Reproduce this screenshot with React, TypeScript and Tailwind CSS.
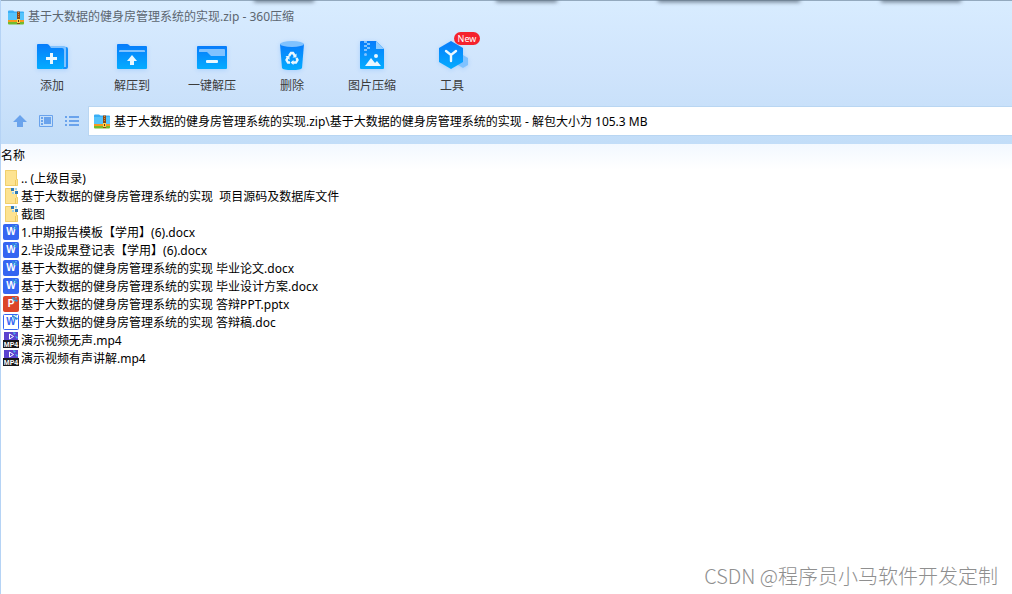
import type { ReactNode } from 'react'

type FileKind = 'up' | 'folder' | 'docx' | 'pptx' | 'doc' | 'mp4'

interface FileRow {
  kind: FileKind
  name: string
}

const files: FileRow[] = [
  { kind: 'up', name: '.. (上级目录)' },
  { kind: 'folder', name: '基于大数据的健身房管理系统的实现  项目源码及数据库文件' },
  { kind: 'folder', name: '截图' },
  { kind: 'docx', name: '1.中期报告模板【学用】(6).docx' },
  { kind: 'docx', name: '2.毕设成果登记表【学用】(6).docx' },
  { kind: 'docx', name: '基于大数据的健身房管理系统的实现 毕业论文.docx' },
  { kind: 'docx', name: '基于大数据的健身房管理系统的实现 毕业设计方案.docx' },
  { kind: 'pptx', name: '基于大数据的健身房管理系统的实现 答辩PPT.pptx' },
  { kind: 'doc', name: '基于大数据的健身房管理系统的实现 答辩稿.doc' },
  { kind: 'mp4', name: '演示视频无声.mp4' },
  { kind: 'mp4', name: '演示视频有声讲解.mp4' },
]

function ArchiveIcon() {
  return (
    <svg viewBox="0 0 16 15" className="h-[15px] w-4 shrink-0" aria-hidden="true">
      <path d="M0 1.500Q0 .5 1 .5h4l1.500 1H15q1 0 1 1V11H0z" fill="#3aaef5" />
      <path d="M0 3h16v7H0z" fill="#55c3fb" />
      <path d="M0 10h16v2H0z" fill="#f79a1f" />
      <path d="M0 12h16v1.500q0 1-1 1H1q-1 0-1-1z" fill="#72bb2c" />
      <path d="M9 1.500h3V14H9z" fill="#8c4a16" />
      <path d="M10 2h1v1h-1zM10 4h1v1h-1zM10 6h1v1h-1z" fill="#d98a35" />
      <path d="M9 9h3v4H9z" fill="#ffd24a" />
      <path d="M10 10h1v2h-1z" fill="#5b3312" />
    </svg>
  )
}

// shared vertical blue gradient of the toolbar drawings
function ToolSvg({ id, children }: { id: string; children: ReactNode }) {
  return (
    <svg viewBox="0 0 32 32" className="size-8 drop-shadow-sm drop-shadow-blue-400/30" aria-hidden="true">
      <defs>
        <linearGradient id={id} x1="0" y1="0" x2="0" y2="1">
          <stop offset="0" stopColor="#087cfb" />
          <stop offset="1" stopColor="#04acff" />
        </linearGradient>
      </defs>
      {children}
    </svg>
  )
}

const tools: { label: string; badge?: string; icon: ReactNode }[] = [
  {
    label: '添加',
    icon: (
      <ToolSvg id="g-add">
        <path d="M27 7h3q2 0 2 2v18q0 2-2 2h-3z" fill="#168ffb" />
        <path d="M13 6h15q2 0 2 2v19H14z" fill="#80c2ff" />
        <path d="M1 5q0-1 1-1h9q1 0 2 1l2 3h11q2 0 2 2v17q0 2-2 2H2q-1 0-1-1z" fill="url(#g-add)" />
        <path d="M14 13h3v4h4v3h-4v4h-3v-4h-4v-3h4z" fill="#eaf8ff" />
      </ToolSvg>
    ),
  },
  {
    label: '解压到',
    icon: (
      <ToolSvg id="g-extract">
        <path d="M1 5q0-1 1-1h9q1 0 2 1l1 1h16q1 0 1 1v21q0 1-1 1H2q-1 0-1-1z" fill="url(#g-extract)" />
        <path d="M3 12v-1q0-1 1-1h24q1 0 1 1v1z" fill="#80c2ff" />
        <path d="M16 15l5 6h-3v4h-4v-4h-3z" fill="#eaf8ff" />
      </ToolSvg>
    ),
  },
  {
    label: '一键解压',
    icon: (
      <ToolSvg id="g-quick">
        <rect x="1" y="6" width="30" height="23" rx="1" fill="url(#g-quick)" />
        <path d="M3 12v-2q0-1 1-1h24q1 0 1 1v6H15l-4-4z" fill="#80c2ff" />
        <rect x="10" y="20" width="12" height="3" rx="1" fill="#eaf8ff" />
      </ToolSvg>
    ),
  },
  {
    label: '删除',
    icon: (
      <ToolSvg id="g-del">
        <path d="M4 4h24l-2 24q-1 2-10 2T6 28z" fill="url(#g-del)" />
        <ellipse cx="16" cy="4" rx="12" ry="3" fill="#80c2ff" />
        <g fill="none" stroke="#eaf8ff" strokeWidth="2.400">
          <path d="M13 16l2-3h2l2 3" />
          <path d="M20.500 18l1 2-1.500 2.500h-4" />
          <path d="M14 22.500h-2L10.500 20l1.500-3" />
        </g>
        <path d="M20.500 13.500v4h-4zM17.500 20v5L14.500 22.500zM9.500 16h4v4z" fill="#eaf8ff" />
      </ToolSvg>
    ),
  },
  {
    label: '图片压缩',
    icon: (
      <ToolSvg id="g-img">
        <path d="M4 2q0-1 1-1h15l8 8v19q0 1-1 1H5q-1 0-1-1z" fill="url(#g-img)" />
        <path d="M20 1l8 8h-8z" fill="#90ccff" />
        <path d="M8 1h3v2H8zM11 3h3v2h-3zM8 5h3v2H8zM11 7h3v2h-3zM8 9h3v2H8z" fill="#80c2ff" />
        <circle cx="9.500" cy="14.500" r="1.500" fill="#80c2ff" />
        <circle cx="20" cy="16" r="2" fill="#eaf8ff" />
        <path d="M9 26l6-8 4 5 2-2 4 5z" fill="#eaf8ff" />
      </ToolSvg>
    ),
  },
  {
    label: '工具',
    badge: 'New',
    icon: (
      <ToolSvg id="g-tool">
        <path d="M27 15l5 3v7l-5 3-5-3v-7z" fill="#80c2ff" />
        <path d="M15 1l12 7v14l-12 7L3 22V8z" fill="url(#g-tool)" />
        <path d="M10 11l5 4 5-4M15 15v6" fill="none" stroke="#eaf8ff" strokeWidth="2.400" strokeLinecap="round" />
      </ToolSvg>
    ),
  },
]

function PinwheelMark() {
  return (
    <>
      <path d="M9 1l3 1-1 2-2-1z" fill="#2f8fd8" />
      <path d="M12 3l3 1-1 2-2-1z" fill="#2f8fd8" />
      <path d="M12 1h2l-1 2zM10 4h2l-1 2z" fill="#5cc3e8" />
    </>
  )
}

function FileIcon({ kind }: { kind: FileKind }) {
  if (kind === 'up' || kind === 'folder') {
    return (
      <svg viewBox="0 0 16 16" className="size-4 shrink-0" aria-hidden="true">
        <path d="M2 0h12v9h1v7H2z" fill="#fde391" />
        <path d="M2.500.5h11v9h1v6h-12z" fill="none" stroke="#f0cf6c" />
        <path d="M12.500 10v6" stroke="#edc85f" />
        {kind === 'folder' && (
          <>
            <path d="M9 0h6v6H9z" fill="#fff" opacity=".6" />
            <path d="M8 0h3v3H8zM12 3h3v3h-3z" fill="#2f7ab8" />
            <path d="M12 0h2v2h-2zM9 4h2v2H9z" fill="#9fd4ea" />
          </>
        )}
      </svg>
    )
  }

  if (kind === 'mp4') {
    return (
      <svg viewBox="0 0 16 16" className="size-4 shrink-0" aria-hidden="true">
        <path d="M1 0h14v9H1z" fill="#5b43cf" />
        <path d="M6.500 2l4 2.500-4 2.500z" fill="none" stroke="#fff" />
        <path d="M10 0l3 1-2 2zM12 4l3 1-1 2z" fill="#48b7ec" />
        <path d="M0 8h16v8H0z" fill="#18181c" />
        <text x="8" y="15" fill="#fff" fontSize="7" fontWeight="700" textAnchor="middle" fontFamily="Liberation Sans, sans-serif">
          MP4
        </text>
      </svg>
    )
  }

  const fill = kind === 'pptx' ? '#dc4428' : kind === 'doc' ? '#ffffff' : '#3566f2'
  const ink = kind === 'doc' ? '#3566f2' : '#ffffff'
  return (
    <svg viewBox="0 0 16 16" className="size-4 shrink-0" aria-hidden="true">
      <rect x=".5" y=".5" width="15" height="15" rx="1" fill={fill} stroke={kind === 'pptx' ? '#dc4428' : '#3566f2'} />
      <text x="8" y="11" fill={ink} fontSize="10" fontWeight="700" textAnchor="middle" fontFamily="Liberation Sans, sans-serif">
        {kind === 'pptx' ? 'P' : 'W'}
      </text>
      <PinwheelMark />
    </svg>
  )
}

// dark edges of the windows lying behind the title bar
function TopShadows() {
  const shadow = 'absolute -top-0.5 h-1 bg-[#5f6f80] blur-[2px]'
  return (
    <div className="pointer-events-none absolute inset-x-0 top-0 h-2 overflow-hidden" aria-hidden="true">
      <div className={`${shadow} left-[25%] w-[6%]`} />
      <div className={`${shadow} left-[49%] w-[6%]`} />
      <div className={`${shadow} left-[65%] w-[14%]`} />
      <div className={`${shadow} left-[87%] w-[8%]`} />
    </div>
  )
}

function AddressBar() {
  return (
    <div className="flex h-7 items-center pl-[11px]">
      <div className="flex w-[77px] shrink-0 items-center gap-2.5 text-[#6aa3ec]">
        <button type="button" aria-label="上级目录">
          <svg viewBox="0 0 16 16" className="size-4" fill="currentColor" aria-hidden="true">
            <path d="M8 2l7 7h-4v5H5V9H1z" />
          </svg>
        </button>
        <button type="button" aria-label="预览">
          <svg viewBox="0 0 16 16" className="size-4" aria-hidden="true">
            <path d="M1.500 2.500h13v11h-13z" fill="none" stroke="currentColor" />
            <path d="M3 4h2v2H3zM3 7h2v2H3zM3 10h2v2H3zM6 4h7v7H6z" fill="currentColor" />
          </svg>
        </button>
        <button type="button" aria-label="列表">
          <svg viewBox="0 0 16 16" className="size-4" fill="currentColor" aria-hidden="true">
            <path d="M1 3h2v2H1zM5 3h10v2H5zM1 7h2v2H1zM5 7h10v2H5zM1 11h2v2H1zM5 11h10v2H5z" />
          </svg>
        </button>
      </div>
      <label className="flex h-full flex-1 items-center gap-1 bg-white pl-[5px] outline outline-[#b9d6f2]">
        <ArchiveIcon />
        <input
          type="text"
          aria-label="路径"
          className="min-w-0 flex-1 bg-transparent pt-0.5 text-black outline-none"
          defaultValue="基于大数据的健身房管理系统的实现.zip\基于大数据的健身房管理系统的实现 - 解包大小为 105.3 MB"
        />
      </label>
    </div>
  )
}

export default function App() {
  return (
    <div className="relative flex min-h-screen flex-col overflow-hidden border-l border-[#b5d3f5] bg-white font-['Noto_Sans','Noto_Sans_CJK_SC',sans-serif] text-xs leading-[18px] text-black">
      <header className="border-t border-[#93a9be] bg-linear-to-b from-[#d8ecff] via-[#cfe4fc] to-[#c2ddf8] pb-[9px]">
        <div className="flex h-8 items-center gap-1 pl-[7px] text-[#5c6670]">
          <ArchiveIcon />
          <h1>基于大数据的健身房管理系统的实现.zip - 360压缩</h1>
        </div>

        <nav className="flex h-[74px] items-start pl-[11px] pt-[7px]" aria-label="工具栏">
          {tools.map((tool) => (
            <button key={tool.label} type="button" className="relative flex w-20 flex-col items-center gap-[5px] text-[#3c3c3c]">
              {tool.icon}
              <span>{tool.label}</span>
              {tool.badge && (
                <span className="absolute -top-2 left-[42px] h-[13px] w-[26px] rounded-full bg-[#f5222d] text-center text-[9px] leading-[13px] text-white">
                  {tool.badge}
                </span>
              )}
            </button>
          ))}
        </nav>

        <AddressBar />
      </header>

      <main>
        <table className="w-full border-collapse text-left">
          <thead>
            <tr className="h-[26px] bg-linear-to-b from-[#f2f8ff] to-white">
              <th className="p-0 pb-0.5 font-normal">名称</th>
            </tr>
          </thead>
          <tbody>
            {files.map((file) => (
              <tr key={file.name}>
                <td className="p-0">
                  <div className="flex h-[18px] items-start gap-0.5 pl-0.5">
                    <FileIcon kind={file.kind} />
                    <span className="whitespace-pre">{file.name}</span>
                  </div>
                </td>
              </tr>
            ))}
          </tbody>
        </table>
      </main>

      <p className="mt-auto pr-3.5 pb-1.5 text-right font-['Noto_Sans_CJK_SC',sans-serif] text-xl leading-6 font-light text-[#8f8f8f]">
        CSDN @程序员小马软件开发定制
      </p>

      <TopShadows />
    </div>
  )
}
